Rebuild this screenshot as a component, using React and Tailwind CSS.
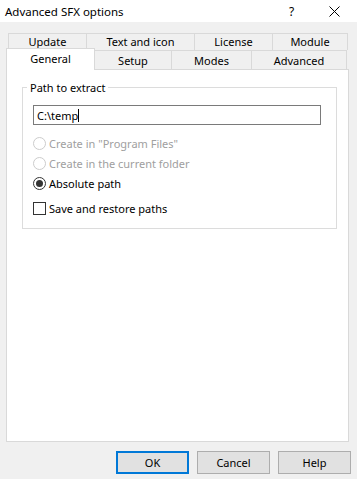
const topTabs = [
  { label: "Update", w: "w-[78px]" },
  { label: "Text and icon", w: "w-[108px]" },
  { label: "License", w: "w-[78px]" },
  { label: "Module", w: "w-[75px]" },
];

const bottomTabs = [
  { label: "Setup", w: "w-[77px]" },
  { label: "Modes", w: "w-[80px]" },
  { label: "Advanced", w: "w-[95px]" },
];

function Radio({ label, checked, disabled, className }) {
  return (
    <div className={`flex items-center ${className}`}>
      <span
        className={`flex h-[13px] w-[13px] items-center justify-center rounded-full border bg-white ${
          disabled ? "border-[#cccccc]" : "border-[#333333]"
        }`}
      >
        {checked ? <span className="h-[7px] w-[7px] rounded-full bg-[#333333]" /> : null}
      </span>
      <span className={`ml-[3px] ${disabled ? "text-[#a0a0a0]" : "text-black"}`}>{label}</span>
    </div>
  );
}

function Button({ label, primary }) {
  return (
    <button
      className={`h-[23px] w-[73px] bg-[#e1e1e1] text-black ${
        primary ? "border-2 border-[#0078d7]" : "border border-[#adadad]"
      }`}
    >
      {label}
    </button>
  );
}

export default function App() {
  return (
    <div
      className="flex h-[479px] w-[357px] flex-col bg-[#f0f0f0] text-[11px] leading-[15px] text-black"
      style={{ fontFamily: '"Noto Sans", sans-serif' }}
    >
      <div className="flex h-[22px] items-center bg-white">
        <span className="pl-[5px] text-[11.5px]">Advanced SFX options</span>
        <span className="ml-auto w-[10px] text-[12px]">?</span>
        <svg className="ml-[30px] mr-[17px]" width="11" height="11" viewBox="0 0 11 11">
          <path d="M0.5 0.5 L10.5 10.5 M10.5 0.5 L0.5 10.5" stroke="#000" strokeWidth="1" />
        </svg>
      </div>

      <div className="pl-[6px] pt-[11px]">
        <div className="ml-[2px] flex h-[17px] border-l border-[#d9d9d9]">
          {topTabs.map((tab) => (
            <div
              key={tab.label}
              className={`${tab.w} flex items-end justify-center border-r border-t border-[#d9d9d9] pb-px`}
            >
              {tab.label}
            </div>
          ))}
        </div>
        <div className="flex h-[19px]">
          <div className="relative z-10 -mt-[2px] flex h-[22px] w-[89px] shrink-0 justify-center border-l border-r border-t border-[#d9d9d9] bg-white pt-[2px]">
            General
          </div>
          {bottomTabs.map((tab) => (
            <div
              key={tab.label}
              className={`${tab.w} flex items-center justify-center border-r border-t border-[#d9d9d9] pt-[1px]`}
            >
              {tab.label}
            </div>
          ))}
        </div>

        <div className="h-[373px] w-[343px] border border-[#d9d9d9] bg-white pl-[15px] pt-[17px]">
          <div className="relative h-[142px] w-[315px] border border-[#dcdcdc] pl-[10px] pt-[17px]">
            <span className="absolute -top-[8px] left-[4px] bg-white px-[3px]">Path to extract</span>
            <div className="flex h-[20px] w-[288px] items-center border border-[#7a7a7a] pl-[3px]">
              <span>C:\temp</span>
              <span className="h-[13px] w-px bg-black" />
            </div>
            <Radio className="mt-[9px] h-[19px]" label={'Create in "Program Files"'} disabled />
            <Radio className="h-[20px]" label="Create in the current folder" disabled />
            <Radio className="h-[20px]" label="Absolute path" checked />
            <div className="mt-[5px] flex h-[20px] items-center">
              <span className="h-[13px] w-[13px] border border-[#333333] bg-white" />
              <span className="ml-[3px]">Save and restore paths</span>
            </div>
          </div>
        </div>
      </div>

      <div className="mt-[9px] flex justify-end gap-[8px] pr-[6px]">
        <Button label="OK" primary />
        <Button label="Cancel" />
        <Button label="Help" />
      </div>
    </div>
  );
}
